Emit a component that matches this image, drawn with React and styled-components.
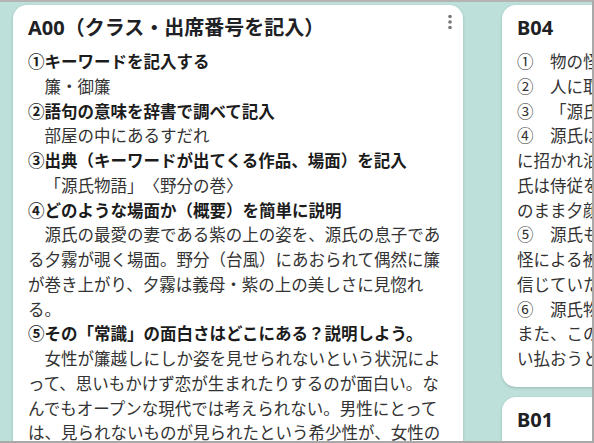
import React from 'react'
import styled, { createGlobalStyle } from 'styled-components'

const GlobalStyle = createGlobalStyle`
body{
  margin:0;
  font-family:"Noto Sans", "Noto Sans CJK JP", sans-serif;
}
`

const Frame = styled.div`
width:594px;
height:443px;
box-sizing:border-box;
border-top:2px solid #b4b4b4;
border-right:2px solid #a9a9a9;
border-bottom:2px solid #a9a9a9;
background:#bde0db;
overflow:hidden;
display:flex;
gap:39px;
padding:3px 0 0 13px;
`

const Column = styled.div`
flex:0 0 450px;
display:flex;
flex-direction:column;
gap:10px;
`

const Card = styled.div`
background:#fff;
border-radius:14px;
padding:9px 20px 16px 15px;
box-shadow:0 1px 3px rgba(0,0,0,0.18);
`

const Header = styled.div`
display:flex;
justify-content:space-between;
align-items:flex-start;
`

const Title = styled.h2`
margin:0;
font-size:20px;
line-height:28px;
font-weight:700;
color:#202124;
text-spacing-trim:space-all;
`

const Menu = styled.svg`
width:4px;
height:16px;
margin:0 -9px 0 0;
flex:none;
`

const Body = styled.div`
margin-top:7px;
font-family:"Noto Sans CJK JP", sans-serif;
font-size:16.5px;
line-height:24.75px;
color:#333;
text-spacing-trim:space-all;
`

const Line = styled.p`
margin:0;
font-weight:${p => (p.$bold ? 700 : 400)};
color:${p => (p.$bold ? '#1c1c1c' : '#333')};
`

const Dots = () => (
  <Menu viewBox="0 0 4 16">
    <circle cx="2" cy="2.5" r="1.8" fill="#777" />
    <circle cx="2" cy="8" r="1.8" fill="#777" />
    <circle cx="2" cy="13.5" r="1.8" fill="#777" />
  </Menu>
)

const leftLines = [
  { bold: true, text: '①キーワードを記入する' },
  { text: '　簾・御簾' },
  { bold: true, text: '②語句の意味を辞書で調べて記入' },
  { text: '　部屋の中にあるすだれ' },
  { bold: true, text: '③出典（キーワードが出てくる作品、場面）を記入' },
  { text: '　「源氏物語」〈野分の巻〉' },
  { bold: true, text: '④どのような場面か（概要）を簡単に説明' },
  { text: '　源氏の最愛の妻である紫の上の姿を、源氏の息子である夕霧が覗く場面。野分（台風）にあおられて偶然に簾が巻き上がり、夕霧は義母・紫の上の美しさに見惚れる。' },
  { bold: true, text: '⑤その「常識」の面白さはどこにある？説明しよう。' },
  { text: '　女性が簾越しにしか姿を見せられないという状況によって、思いもかけず恋が生まれたりするのが面白い。なんでもオープンな現代では考えられない。男性にとっては、見られないものが見られたという希少性が、女性の魅力をより高めたのだろう。' },
]

const rightLines = [
  '①　物の怪とは人にとりつく死霊や生霊のこと。',
  '②　人に取りついて病気にさせ、命を奪ったりする。',
  '③　「源氏物語」〈夕顔の巻〉',
  '④　源氏は忍び歩きの途中で出会った夕顔を、ある廃院に招かれ泊まる。夜中に物の怪が現れ夕顔が息絶え、源氏は侍従を呼び、急いで明かりを持ってこさせたが、そのまま夕顔は息絶えてしまった。',
  '⑤　源氏も当時の人々と同じように、夕顔の急死を物の怪による被害だと考えた。当時の人々は物の怪の存在を信じていたのである。',
  '⑥　源氏物語には物の怪が登場する場面が数多くある。また、このような物の怪を、僧侶の加持祈祷によって追い払おうとしていた。',
]

const App = () => {
  return (
    <>
      <GlobalStyle />
      <Frame>
        <Column>
          <Card>
            <Header>
              <Title>A00（クラス・出席番号を記入）</Title>
              <Dots />
            </Header>
            <Body>
              {leftLines.map((l, i) => (
                <Line key={i} $bold={l.bold}>{l.text}</Line>
              ))}
            </Body>
          </Card>
        </Column>
        <Column>
          <Card>
            <Header>
              <Title>B04</Title>
              <Dots />
            </Header>
            <Body>
              {rightLines.map((t, i) => (
                <Line key={i}>{t}</Line>
              ))}
            </Body>
          </Card>
          <Card>
            <Header>
              <Title>B01</Title>
              <Dots />
            </Header>
            <Body>
              <Line $bold>①キーワードを記入する</Line>
              <Line>　物の怪</Line>
            </Body>
          </Card>
        </Column>
      </Frame>
    </>
  )
}

export default App
